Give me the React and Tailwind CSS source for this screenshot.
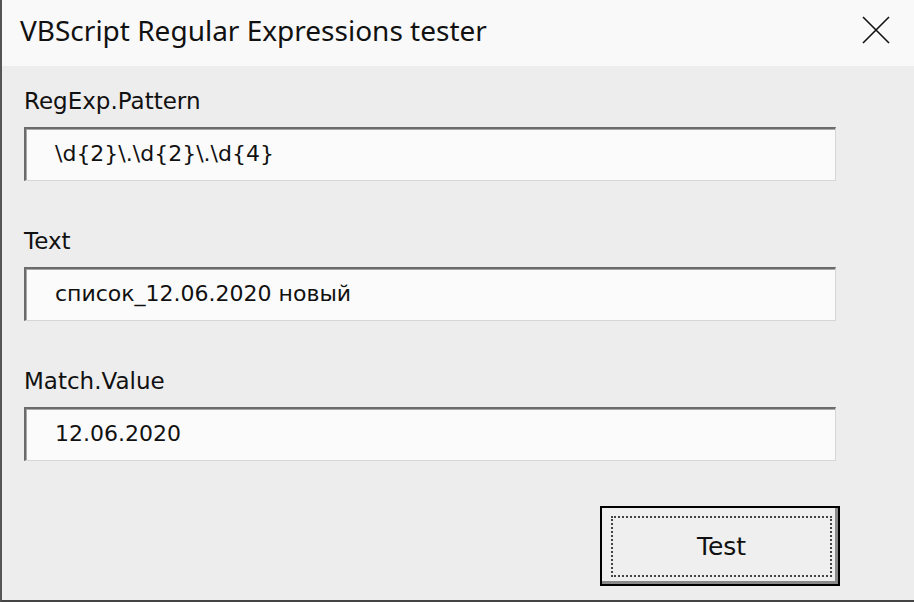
import React from "react";

const Field = ({ label, value }) => (
  <div className="flex flex-col">
    <div className="text-[23px] leading-[34px] text-[#111] mb-[9px]">{label}</div>
    <div className="w-[812px] h-[54px] border-t-2 border-l-2 border-t-[#6b6b6b] border-l-[#6b6b6b] border-b border-r border-b-[#d6d6d6] border-r-[#d6d6d6] shadow-[inset_1px_1px_0_#a8a8a8] bg-[#fbfbfb] flex items-center pl-[29px] pb-[3px] text-[22px] text-[#111]">
      {value}
    </div>
  </div>
);

const App = () => {
  return (
    <div
      className="w-[914px] h-[602px] bg-[#eeeded] border-l-2 border-l-[#555] border-b-2 border-b-[#444] flex flex-col overflow-hidden"
      style={{ fontFamily: "'DejaVu Sans', sans-serif" }}
    >
      <div className="h-[66px] bg-[#f9f9f9] flex items-center justify-between pl-[18px] pr-[24px]">
        <div
          className="text-[28px] text-[#111] -mt-[6px]"
          style={{ fontFamily: "'Noto Sans', sans-serif" }}
        >
          VBScript Regular Expressions tester
        </div>
        <svg width="28" height="28" viewBox="0 0 28 28" className="-mt-[6px]">
          <path d="M1 1 L27 27 M27 1 L1 27" stroke="#111" strokeWidth="1.6" fill="none" />
        </svg>
      </div>
      <div className="flex flex-col pl-[22px] pt-[18px] gap-[43px]">
        <Field label="RegExp.Pattern" value="\d{2}\.\d{2}\.\d{4}" />
        <Field label="Text" value="список_12.06.2020 новый" />
        <Field label="Match.Value" value="12.06.2020" />
      </div>
      <div className="flex justify-end pr-[74px] mt-[45px]">
        <button className="w-[240px] h-[80px] border-2 border-black shadow-[inset_-3px_-3px_0_#8a8a8a] bg-[#efefef] pt-[8px] pl-[9px] pr-[6px] pb-[7px]">
          <div className="w-full h-full border-2 border-dotted border-[#444] flex items-center justify-center text-[25px] text-[#111]">
            Test
          </div>
        </button>
      </div>
    </div>
  );
};

export default App;
